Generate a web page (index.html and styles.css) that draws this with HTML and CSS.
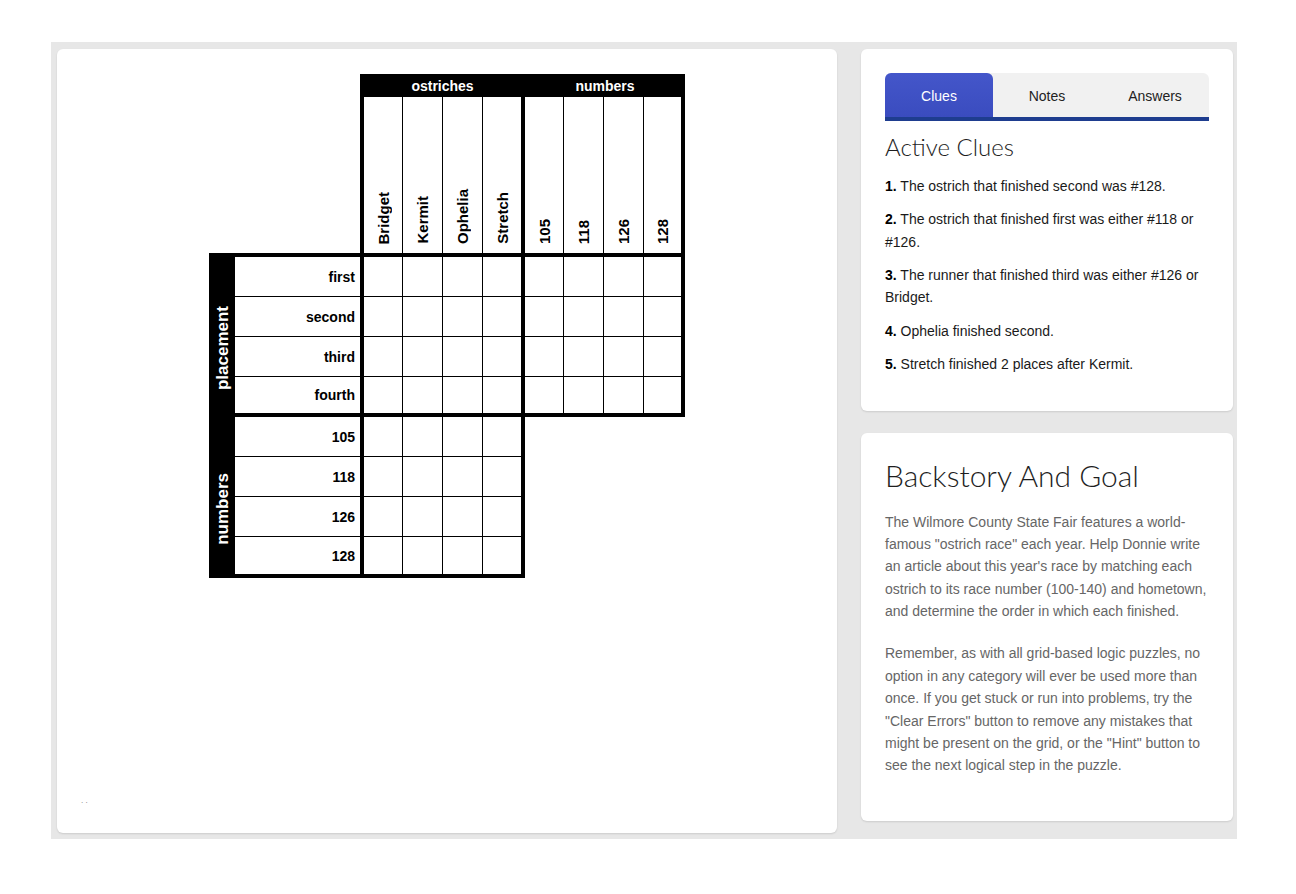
FILE: index.html
```html
<!DOCTYPE html>
<html lang="en">
<head>
  <meta charset="UTF-8" />
  <title>Ostrich Race Logic Puzzle</title>
  <link rel="stylesheet" href="styles.css">
</head>
<body>
  <div class="wrap">
    <div class="board">
      <div class="puzzle">
        <div class="corner"></div>
        <div class="cat">ostriches</div>
        <div class="cat">numbers</div>

        <div class="corner under"></div>
        <div class="col first"><span>Bridget</span></div>
        <div class="col"><span>Kermit</span></div>
        <div class="col"><span>Ophelia</span></div>
        <div class="col thick"><span>Stretch</span></div>
        <div class="col"><span>105</span></div>
        <div class="col"><span>118</span></div>
        <div class="col"><span>126</span></div>
        <div class="col thick"><span>128</span></div>

        <div class="side"><span>placement</span></div>
        <div class="row-label">first</div>
        <div class="cell first"></div><div class="cell"></div><div class="cell"></div><div class="cell thick"></div>
        <div class="cell"></div><div class="cell"></div><div class="cell"></div><div class="cell thick"></div>
        <div class="row-label">second</div>
        <div class="cell first"></div><div class="cell"></div><div class="cell"></div><div class="cell thick"></div>
        <div class="cell"></div><div class="cell"></div><div class="cell"></div><div class="cell thick"></div>
        <div class="row-label">third</div>
        <div class="cell first"></div><div class="cell"></div><div class="cell"></div><div class="cell thick"></div>
        <div class="cell"></div><div class="cell"></div><div class="cell"></div><div class="cell thick"></div>
        <div class="row-label end">fourth</div>
        <div class="cell first end"></div><div class="cell end"></div><div class="cell end"></div><div class="cell thick end"></div>
        <div class="cell end"></div><div class="cell end"></div><div class="cell end"></div><div class="cell thick end"></div>

        <div class="side"><span>numbers</span></div>
        <div class="row-label">105</div>
        <div class="cell first"></div><div class="cell"></div><div class="cell"></div><div class="cell thick"></div>
        <div class="row-label">118</div>
        <div class="cell first"></div><div class="cell"></div><div class="cell"></div><div class="cell thick"></div>
        <div class="row-label">126</div>
        <div class="cell first"></div><div class="cell"></div><div class="cell"></div><div class="cell thick"></div>
        <div class="row-label end">128</div>
        <div class="cell first end"></div><div class="cell end"></div><div class="cell end"></div><div class="cell thick end"></div>
      </div>
      <div class="board-foot">. .</div>
    </div>

    <div class="side-col">
      <div class="panel">
        <div class="tabs">
          <div class="tab active">Clues</div>
          <div class="tab">Notes</div>
          <div class="tab">Answers</div>
        </div>
        <h2 class="clues-title">Active Clues</h2>
        <p class="clue"><b>1.</b> The ostrich that finished second was #128.</p>
        <p class="clue"><b>2.</b> The ostrich that finished first was either #118 or #126.</p>
        <p class="clue"><b>3.</b> The runner that finished third was either #126 or Bridget.</p>
        <p class="clue"><b>4.</b> Ophelia finished second.</p>
        <p class="clue"><b>5.</b> Stretch finished 2 places after Kermit.</p>
      </div>

      <div class="panel">
        <h2 class="story-title">Backstory And Goal</h2>
        <p class="story">The Wilmore County State Fair features a world-famous "ostrich race" each year. Help Donnie write an article about this year's race by matching each ostrich to its race number (100-140) and hometown, and determine the order in which each finished.</p>
        <p class="story">Remember, as with all grid-based logic puzzles, no option in any category will ever be used more than once. If you get stuck or run into problems, try the "Clear Errors" button to remove any mistakes that might be present on the grid, or the "Hint" button to see the next logical step in the puzzle.</p>
      </div>
    </div>
  </div>
</body>
</html>
```

FILE: styles.css
```css
html, body {
  margin: 0;
}
body {
  background: #fff;
  font-family: "Liberation Sans", Arial, Helvetica, sans-serif;
  font-size: 14px;
  color: #222;
}
.wrap {
  margin: 42px 0 0 51px;
  width: 1186px;
  box-sizing: border-box;
  padding: 7px 4px 6px 6px;
  background: #e7e7e7;
  display: flex;
  gap: 24px;
  align-items: flex-start;
}
.board {
  width: 780px;
  height: 784px;
  box-sizing: border-box;
  padding-top: 25px;
  background: #fff;
  border-radius: 6px;
  box-shadow: 0 1px 2px rgba(0, 0, 0, 0.12);
  display: flex;
  flex-direction: column;
  align-items: center;
}
.board-foot {
  margin-top: auto;
  align-self: flex-start;
  padding: 0 0 28px 24px;
  font-size: 8px;
  line-height: 9px;
  color: #777;
}

/* logic grid */
.puzzle {
  display: grid;
  grid-template-columns: 26px 125px 43px 40px 40px 42px 39px 40px 40px 41px;
  grid-template-rows: 23px 160px repeat(7, 40px) 41px;
  font-weight: bold;
  color: #000;
}
.puzzle > div {
  box-sizing: border-box;
}
.corner {
  grid-column: span 2;
}
.corner.under {
  border-bottom: 4px solid #000;
}
.cat {
  grid-column: span 4;
  background: #000;
  color: #fff;
  font-size: 14px;
  display: flex;
  align-items: center;
  justify-content: center;
}
.col {
  border-right: 1px solid #000;
  border-bottom: 4px solid #000;
  display: flex;
  align-items: flex-end;
  justify-content: center;
  padding-bottom: 9px;
  font-size: 15px;
}
.col span,
.side span {
  writing-mode: vertical-rl;
  transform: rotate(180deg);
  line-height: 1;
}
.side {
  grid-column: 1;
  grid-row: span 4;
  background: #000;
  color: #fff;
  font-size: 17px;
  display: flex;
  align-items: center;
  justify-content: center;
  padding-top: 22px;
}
.row-label {
  grid-column: 2;
  border-bottom: 1px solid #000;
  padding-right: 5px;
  font-size: 14px;
  display: flex;
  align-items: center;
  justify-content: flex-end;
}
.cell {
  border-right: 1px solid #000;
  border-bottom: 1px solid #000;
  background: #fff;
}
.col.first,
.cell.first {
  border-left: 4px solid #000;
}
.col.thick,
.cell.thick {
  border-right-width: 4px;
}
.row-label.end,
.cell.end {
  border-bottom-width: 4px;
}

/* right column */
.side-col {
  width: 372px;
  display: flex;
  flex-direction: column;
  gap: 22px;
}
.panel {
  background: #fff;
  border-radius: 6px;
  padding: 24px;
  box-shadow: 0 1px 2px rgba(0, 0, 0, 0.12);
}
.tabs {
  display: flex;
  background: #f1f1f1;
  border-radius: 6px 6px 0 0;
  border-bottom: 4px solid #1e3d8f;
}
.tab {
  flex: 1;
  height: 44px;
  line-height: 46px;
  text-align: center;
  font-size: 14px;
  color: #222;
}
.tab.active {
  background: linear-gradient(#4456ca, #3a4cbf);
  color: #fff;
  border-radius: 6px 6px 0 0;
}
.clues-title,
.story-title {
  font-family: Lato, "Open Sans", sans-serif;
  font-weight: 300;
  color: #1e1e1e;
  line-height: 1.2;
}
.clues-title {
  font-size: 24px;
  margin: 12px 0 13px;
}
.story-title {
  font-size: 30px;
  margin: 0 0 18px;
}
.clue {
  margin: 0 0 11px;
  line-height: 1.6;
  color: #1a1a1a;
}
.clue b {
  color: #000;
}
.story {
  margin: 0 0 20px;
  line-height: 1.6;
  color: #666;
}
```
